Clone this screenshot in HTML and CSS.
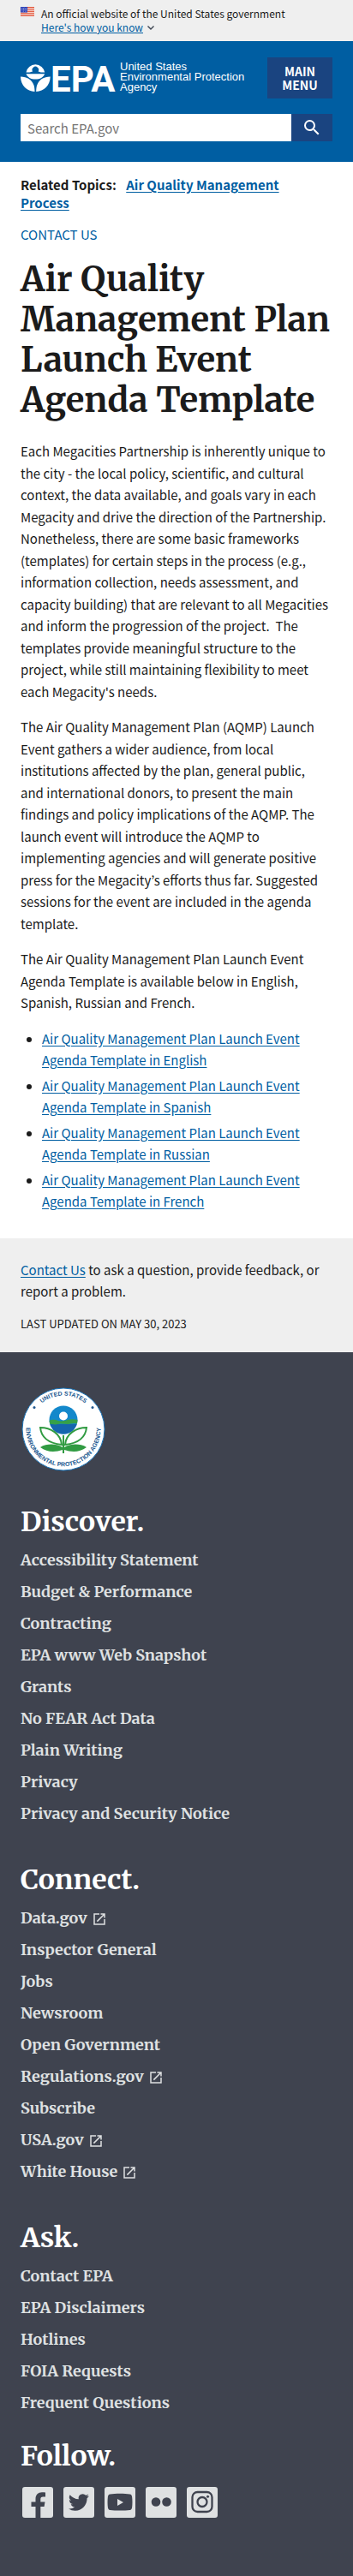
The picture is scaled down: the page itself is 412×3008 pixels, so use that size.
FILE: index.html
```html
<!DOCTYPE html>
<html lang="en">
<head>
<meta charset="utf-8">
<meta name="viewport" content="width=device-width, initial-scale=1">
<title>Air Quality Management Plan Launch Event Agenda Template | US EPA</title>
<link rel="stylesheet" href="styles.css">
</head>
<body>
<svg class="sprite" aria-hidden="true">
  <symbol id="launch" viewBox="0 0 24 24"><path d="M19 19H5V5h7V3H3v18h18v-9h-2zM14 3v2h3.600L7.800 14.800l1.400 1.400L19 6.400V10h2V3z"/></symbol>
</svg>

<section class="banner" aria-label="Official government website">
  <svg class="banner-flag" viewBox="0 0 16 11" aria-hidden="true">
    <rect width="16" height="11" fill="#fff"/>
    <path d="M0 .5h16M0 2.200h16M0 3.900h16M0 5.600h16M0 7.300h16M0 9h16M0 10.600h16" stroke="#db3e1f" stroke-width=".9"/>
    <rect width="8" height="6.500" fill="#1e33b1"/>
    <path d="M1 1.200h6.500M1.500 2.500h6M1 3.800h6.500M1.500 5.100h6" stroke="#fff" stroke-width=".7" stroke-dasharray=".8 .9"/>
  </svg>
  <div class="banner-text">
    <p>An official website of the United States government</p>
    <button type="button" class="banner-toggle"><span>Here's how you know</span>
      <svg viewBox="0 0 12 12" aria-hidden="true"><path d="M2.500 4.500 6 8l3.500-3.500" fill="none" stroke="currentColor" stroke-width="1.400"/></svg>
    </button>
  </div>
</section>

<header class="header">
  <div class="header-top">
    <a class="logo" href="#" aria-label="United States Environmental Protection Agency">
      <svg class="logo-mark" viewBox="0 0 114 36" aria-hidden="true">
        <g fill="#fff">
          <path d="M6.500 12.500a11 11 0 0 1 21.700 0h-4.300c-1.800 0-1.600-1-3.300-1a3.800 3.800 0 1 0-6.500 0c-1.800 0-1.900 1-3.600 1z"/>
          <path d="M6.500 14.200h21.700c-1.600 4.200-5.500 6.300-10.800 6.300s-9.300-2.100-10.900-6.300z"/>
          <path d="M0 17.500c7.500 0 13.300 3.500 15.500 10 .7 2 1 4.500 1 7.500C7.500 34.500.2 28 0 17.500zM34.700 17.500c-7.500 0-13.300 3.500-15.500 10-.7 2-1 4.500-1 7.500 9-.5 16.300-7 16.500-17.500z"/>
        </g>
        <text class="logo-letters" x="35" y="35">EPA</text>
      </svg>
      <span class="logo-name">United States<br>Environmental Protection<br>Agency</span>
    </a>
    <button type="button" class="menu-button">Main Menu</button>
  </div>
  <form class="search" role="search">
    <input class="search-input" type="search" aria-label="Search" placeholder="Search EPA.gov">
    <button class="search-button" type="submit" aria-label="Search">
      <svg viewBox="0 0 24 24" aria-hidden="true"><path fill="#fff" d="M15.500 14h-.79l-.28-.27A6.470 6.470 0 0 0 16 9.500 6.500 6.500 0 1 0 9.500 16c1.610 0 3.090-.59 4.230-1.570l.27.28v.79l5 4.990L20.490 19l-4.990-5zm-6 0C7.010 14 5 11.990 5 9.500S7.010 5 9.500 5 14 7.010 14 9.500 11.990 14 9.500 14z"/></svg>
    </button>
  </form>
</header>

<main class="main">
  <p class="related">Related Topics: <a href="#">Air Quality Management Process</a></p>
  <p class="contact"><a href="#">Contact Us</a></p>
  <h1 class="title">Air Quality Management Plan Launch Event Agenda Template</h1>
  <div class="article">
    <p>Each Megacities Partnership is inherently unique to the city - the local policy, scientific, and cultural context, the data available, and goals vary in each Megacity and drive the direction of the Partnership. Nonetheless, there are some basic frameworks (templates) for certain steps in the process (e.g., information collection, needs assessment, and capacity building) that are relevant to all Megacities and inform the progression of the project.&nbsp; The templates provide meaningful structure to the project, while still maintaining flexibility to meet each Megacity's needs.</p>
    <p>The Air Quality Management Plan (AQMP) Launch Event gathers a wider audience, from local institutions affected by the plan, general public, and international donors, to present the main findings and policy implications of the AQMP. The launch event will introduce the AQMP to implementing agencies and will generate positive press for the Megacity’s efforts thus far. Suggested sessions for the event are included in the agenda template.</p>
    <p>The Air Quality Management Plan Launch Event Agenda Template is available below in English, Spanish, Russian and French.</p>
    <ul>
      <li><a href="#">Air Quality Management Plan Launch Event Agenda Template in English</a></li>
      <li><a href="#">Air Quality Management Plan Launch Event Agenda Template in Spanish</a></li>
      <li><a href="#">Air Quality Management Plan Launch Event Agenda Template in Russian</a></li>
      <li><a href="#">Air Quality Management Plan Launch Event Agenda Template in French</a></li>
    </ul>
  </div>
</main>

<section class="feedback">
  <p><a href="#">Contact Us</a> to ask a question, provide feedback, or report a problem.</p>
  <p class="updated">Last updated on May 30, 2023</p>
</section>

<footer class="footer">
  <svg class="seal" viewBox="0 0 100 100" role="img" aria-label="EPA seal">
    <defs>
      <path id="seal-top" d="M10.500 50a39.500 39.500 0 0 1 79 0"/>
      <path id="seal-bottom" d="M17 21.500A43.500 43.500 0 1 0 83 21.500"/>
      <clipPath id="seal-disc"><circle cx="50" cy="39" r="16.500"/></clipPath>
    </defs>
    <circle cx="50" cy="50" r="48" fill="#fff" stroke="#1672b8" stroke-width="1"/>
    <g clip-path="url(#seal-disc)">
      <path fill="#1388cb" d="M33 22h34v34H33z"/>
      <path fill="#1565ae" d="M33 44h34v13H33z"/>
      <path fill="#36a04a" d="M33 40c4-2 8-1 11 0s8 0 11-1 7-1 12 0v5c-5-2-8 0-12 0s-7-1-11 0-7 0-11 0z"/>
    </g>
    <circle cx="50" cy="34.500" r="5" fill="#fff"/>
    <g fill="#fff" stroke="#319b42" stroke-width="2">
      <path d="M48 68C30 66 24 58 23 48c12 0 24 7 25 20zM52 68c18-2 24-10 25-20-12 0-24 7-25 20z"/>
      <path fill="#319b42" stroke="none" d="M49 74c-9 3-18 3-26-3 8-5 20-4 26 0zM51 74c9 3 18 3 26-3-8-5-20-4-26 0z"/>
      <path d="M50 57v21" stroke-width="2"/>
    </g>
    <circle cx="16" cy="24.500" r="1.500" fill="#20578f"/>
    <circle cx="84" cy="24.500" r="1.500" fill="#20578f"/>
    <text class="seal-text"><textPath href="#seal-top" startOffset="50%" text-anchor="middle">UNITED STATES</textPath></text>
    <text class="seal-text"><textPath href="#seal-bottom" startOffset="50%" text-anchor="middle">ENVIRONMENTAL PROTECTION AGENCY</textPath></text>
  </svg>

  <nav class="footer-nav" aria-label="Footer">
    <section class="footer-group">
      <h2>Discover.</h2>
      <ul>
        <li><a href="#">Accessibility Statement</a></li>
        <li><a href="#">Budget &amp; Performance</a></li>
        <li><a href="#">Contracting</a></li>
        <li><a href="#">EPA www Web Snapshot</a></li>
        <li><a href="#">Grants</a></li>
        <li><a href="#">No FEAR Act Data</a></li>
        <li><a href="#">Plain Writing</a></li>
        <li><a href="#">Privacy</a></li>
        <li><a href="#">Privacy and Security Notice</a></li>
      </ul>
    </section>
    <section class="footer-group">
      <h2>Connect.</h2>
      <ul>
        <li><a href="#">Data.gov<svg class="launch"><use href="#launch"/></svg></a></li>
        <li><a href="#">Inspector General</a></li>
        <li><a href="#">Jobs</a></li>
        <li><a href="#">Newsroom</a></li>
        <li><a href="#">Open Government</a></li>
        <li><a href="#">Regulations.gov<svg class="launch"><use href="#launch"/></svg></a></li>
        <li><a href="#">Subscribe</a></li>
        <li><a href="#">USA.gov<svg class="launch"><use href="#launch"/></svg></a></li>
        <li><a href="#">White House<svg class="launch"><use href="#launch"/></svg></a></li>
      </ul>
    </section>
    <section class="footer-group">
      <h2>Ask.</h2>
      <ul>
        <li><a href="#">Contact EPA</a></li>
        <li><a href="#">EPA Disclaimers</a></li>
        <li><a href="#">Hotlines</a></li>
        <li><a href="#">FOIA Requests</a></li>
        <li><a href="#">Frequent Questions</a></li>
      </ul>
    </section>
  </nav>
  <section class="follow">
    <h2>Follow.</h2>
    <div class="social">
      <a href="#" aria-label="Facebook"><svg viewBox="0 0 36 36"><path d="M15.500 36V23H10.500v-5.500h5V14c0-5 3-7.800 7.500-7.800 1.500 0 3 .1 4 .3v5h-2.800c-2.200 0-2.900 1.200-2.900 2.700v3.300h5.200L25.600 23h-4.300v13z"/></svg></a>
      <a href="#" aria-label="Twitter"><svg viewBox="0 0 36 36"><path transform="translate(6 6)" d="M23.950 4.570a10 10 0 0 1-2.820.77 4.960 4.960 0 0 0 2.160-2.720c-.95.55-2 .95-3.130 1.180a4.920 4.920 0 0 0-8.380 4.480C7.690 8.090 4.070 6.130 1.640 3.160a4.920 4.920 0 0 0 1.520 6.570 4.900 4.900 0 0 1-2.230-.61v.06a4.920 4.920 0 0 0 3.950 4.830 5 5 0 0 1-2.210.08 4.940 4.940 0 0 0 4.600 3.420A9.870 9.870 0 0 1 0 19.540a14 14 0 0 0 7.550 2.210c9.050 0 14-7.500 14-13.980l-.02-.64a10 10 0 0 0 2.420-2.560z"/></svg></a>
      <a href="#" aria-label="YouTube"><svg viewBox="0 0 36 36"><path fill-rule="evenodd" d="M6.500 8.400c6-.9 17-.9 23 0 1.700.3 2.400 1.400 2.600 3 .5 4 .5 8.500 0 12.500-.2 1.600-.9 2.700-2.600 3-6 .9-17 .9-23 0-1.700-.3-2.400-1.400-2.600-3-.5-4-.5-8.500 0-12.500.2-1.600.9-2.700 2.600-3zM15 14v8l7-4z"/></svg></a>
      <a href="#" aria-label="Flickr"><svg viewBox="0 0 36 36"><circle cx="12" cy="17.500" r="5.300"/><circle cx="24.500" cy="17.500" r="5.300"/></svg></a>
      <a href="#" aria-label="Instagram"><svg viewBox="0 0 36 36"><g fill="none" stroke="#3f434f" stroke-width="2.300"><rect x="6.500" y="6" width="23" height="23" rx="6"/><circle cx="18" cy="17.500" r="5.500"/></g><circle cx="24.500" cy="11.300" r="1.500"/></svg></a>
    </div>
  </section>
</footer>
</body>
</html>
```
FILE: styles.css
```css
* {
  box-sizing: border-box;
}

body {
  margin: 0;
  background: #fff;
  color: #1b1b1b;
  font-family: "Source Sans Pro", "Noto Sans CJK KR", sans-serif;
  font-size: 15px;
  line-height: 1.7;
}

p, ul, h1, h2 {
  margin: 0;
}

a {
  color: #005ea2;
  text-underline-offset: 2px;
}

button, input {
  border: 0;
  border-radius: 0;
  font: inherit;
}

.sprite {
  display: none;
}

/* Government banner */
.banner {
  display: flex;
  gap: 8px;
  padding: 8px 24px;
  background: #efefef;
  font-size: 12px;
  line-height: 16px;
}

.banner-flag {
  flex: none;
  width: 16px;
  height: 11px;
}

.banner-toggle {
  display: flex;
  align-items: center;
  gap: 3px;
  padding: 0;
  background: none;
  color: #005ea2;
}

.banner-toggle span {
  text-decoration: underline;
}

.banner-toggle svg {
  width: 12px;
  height: 12px;
  color: #3d4551;
}

/* Header */
.header {
  padding: 19px 24px 24px;
  background: #005ea2;
}

.header-top {
  display: flex;
  align-items: flex-start;
  justify-content: space-between;
  margin-bottom: 18px;
}

.logo {
  display: flex;
  gap: 2px;
  padding-top: 5px;
  color: #fff;
  text-decoration: none;
}

.logo-mark {
  flex: none;
  width: 114px;
  height: 36px;
  overflow: visible;
}

.logo-letters {
  fill: #fff;
  font: bold 42px Roboto, sans-serif;
}

.logo-name {
  font: 13px/12px "Liberation Sans", sans-serif;
}

.menu-button {
  width: 76px;
  padding: 8px 12px;
  background: #1a4480;
  color: #fff;
  font-size: 14px;
  font-weight: bold;
  line-height: 16px;
  text-transform: uppercase;
}

.search {
  display: flex;
}

.search-input {
  flex: 1;
  min-width: 0;
  height: 32px;
  padding: 0 8px;
  background: #fff;
}

.search-input::placeholder {
  color: #757575;
}

.search-button {
  display: flex;
  align-items: center;
  justify-content: center;
  width: 48px;
  padding: 0;
  background: #1a4480;
}

.search-button svg {
  width: 24px;
  height: 24px;
}

/* Content */
.main {
  padding: 16px 24px 30px;
}

.related {
  padding-right: 4px;
  font-weight: bold;
  line-height: 21px;
}

.related a {
  margin-left: 8px;
}

.contact {
  margin-top: 16px;
  line-height: 21px;
  text-transform: uppercase;
}

.contact a {
  text-decoration: none;
}

.title {
  margin: 19px 0 23px;
  font-family: Merriweather, "DejaVu Serif Condensed", "DejaVu Serif", serif;
  font-size: 40px;
  line-height: 47px;
}

.article {
  display: grid;
  gap: 16px;
  padding-right: 4px;
}

.article ul {
  display: grid;
  gap: 4px;
  padding-left: 25px;
}

.feedback {
  padding: 24px 24px 22px;
  background: #efefef;
}

.updated {
  margin-top: 14px;
  font-size: 13px;
  text-transform: uppercase;
}

/* Footer */
.footer {
  padding: 40px 24px 68px;
  background: #3f434f;
  font-family: Merriweather, "DejaVu Serif Condensed", "DejaVu Serif", serif;
  font-weight: bold;
}

.seal {
  display: block;
  width: 100px;
  height: 100px;
  margin-bottom: 38px;
}

.seal-text {
  fill: #20578f;
  font: bold 7px "Liberation Sans", sans-serif;
}

.footer h2 {
  color: #fff;
  font-size: 32px;
  line-height: 40px;
}

.footer-nav {
  display: grid;
  gap: 47px;
}

.footer ul {
  display: grid;
  gap: 16px;
  margin-top: 14px;
  padding: 0;
  list-style: none;
  font-size: 18px;
  line-height: 21px;
}

.footer a {
  color: #dfe1e2;
  text-decoration: none;
}

.launch {
  width: 18px;
  height: 18px;
  margin-left: 5px;
  fill: currentColor;
  vertical-align: -4px;
}

.follow {
  margin-top: 32px;
}

.social {
  display: flex;
  gap: 12px;
  margin-top: 16px;
  padding-left: 2px;
}

.social svg {
  display: block;
  width: 36px;
  height: 36px;
  border-radius: 3px;
  background: #dfe1e2;
  fill: #3f434f;
}
```
